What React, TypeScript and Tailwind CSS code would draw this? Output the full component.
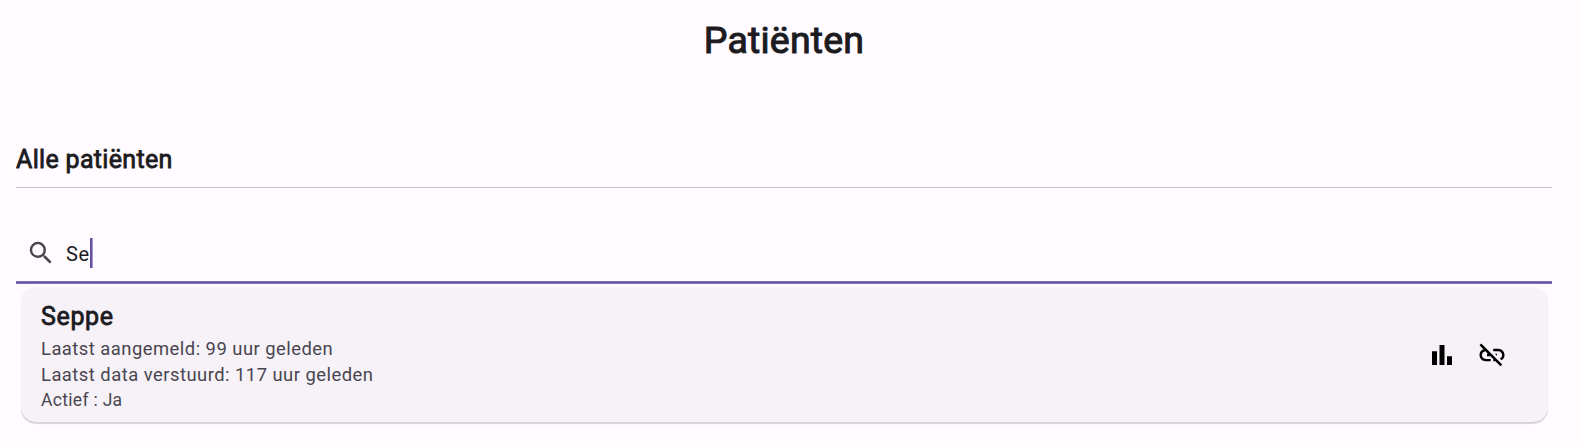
import { MdOutlineLinkOff, MdSearch } from "react-icons/md";

export default function App() {
  return (
    <div className="h-[447px] overflow-hidden bg-[#fffbff] pl-4 pr-[30px] font-['Roboto',sans-serif] text-[#1c1b1f]">
      <h1 className="flex h-[81px] items-center justify-center text-[37.5px] tracking-[0.2px] [-webkit-text-stroke:1px_#1c1b1f]">
        Patiënten
      </h1>
      <h2 className="mt-[54px] flex h-[53px] items-center border-b border-[#c4c0c7] pb-[2px] text-[25px] tracking-[0.32px] [-webkit-text-stroke:0.8px_#1c1b1f]">
        Alle patiënten
      </h2>
      <div className="mt-[34px] flex h-[59px] items-center pl-[10px] pt-[2px] text-[20px]">
        <MdSearch className="mr-[10px] size-[30px] text-[#49454f]" />
        <span className="pt-[2px] tracking-[0.5px]">Se</span>
        <span className="ml-[0.6px] h-[30px] w-[3px] border-r border-[#a899cc] bg-[#6750a4]" />
      </div>
      <div className="h-[3px] border-y border-[#8470b6] bg-[#6750a4]" />
      <div className="mx-[4.5px] mt-[3px] flex h-[135px] items-center justify-between rounded-[15px] bg-[#f6f2f8] pl-[20.5px] pr-[40.5px] shadow-[0_1.5px_1px_rgba(0,0,0,.16)]">
        <div className="pt-[6px] text-[18.4px] leading-[26px] tracking-[0.48px] text-[#49454f]">
          <h3 className="mb-[5px] text-[25px] leading-[28px] tracking-[0.65px] text-[#1c1b1f] [-webkit-text-stroke:0.8px_#1c1b1f]">
            Seppe
          </h3>
          <p>Laatst aangemeld: 99 uur geleden</p>
          <p>Laatst data verstuurd: 117 uur geleden</p>
          <p className="text-[17.5px] leading-[25px] tracking-[0.31px]">Actief : Ja</p>
        </div>
        <div className="flex gap-5 text-black">
          <svg viewBox="0 0 24 24" className="size-[30px]" fill="currentColor">
            <path d="M4 9h4v11H4zM10 4h4v16h-4zM16 13h4v7h-4z" />
          </svg>
          <MdOutlineLinkOff className="size-[30px]" />
        </div>
      </div>
    </div>
  );
}
